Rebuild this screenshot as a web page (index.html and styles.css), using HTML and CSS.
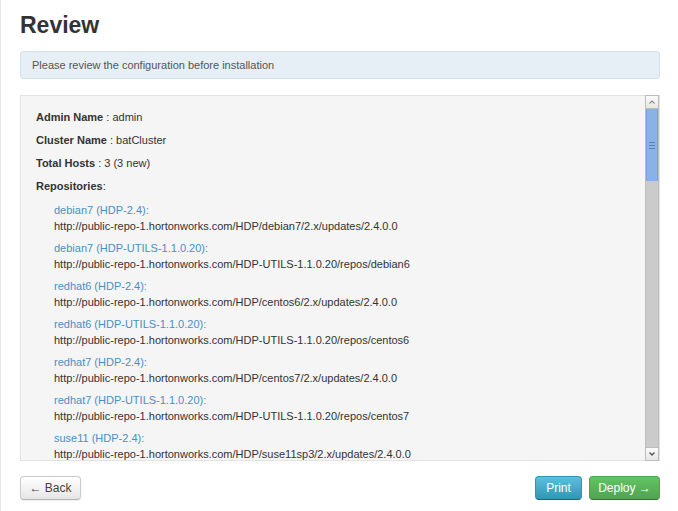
FILE: index.html
```html
<!DOCTYPE html>
<html>
<head>
<meta charset="utf-8">
<link rel="stylesheet" href="styles.css">
</head>
<body>
<div class="page">
  <h1 class="title">Review</h1>
  <div class="alert">Please review the configuration before installation</div>
  <div class="review-box">
    <div class="review-content">
      <p class="line"><b>Admin Name</b> : admin</p>
      <p class="line"><b>Cluster Name</b> : batCluster</p>
      <p class="line"><b>Total Hosts</b> : 3 (3 new)</p>
      <p class="line"><b>Repositories</b>:</p>
      <div class="repos">
        <div class="repo"><a class="repo-name">debian7 (HDP-2.4):</a><div class="repo-url">http://public-repo-1.hortonworks.com/HDP/debian7/2.x/updates/2.4.0.0</div></div>
        <div class="repo"><a class="repo-name">debian7 (HDP-UTILS-1.1.0.20):</a><div class="repo-url">http://public-repo-1.hortonworks.com/HDP-UTILS-1.1.0.20/repos/debian6</div></div>
        <div class="repo"><a class="repo-name">redhat6 (HDP-2.4):</a><div class="repo-url">http://public-repo-1.hortonworks.com/HDP/centos6/2.x/updates/2.4.0.0</div></div>
        <div class="repo"><a class="repo-name">redhat6 (HDP-UTILS-1.1.0.20):</a><div class="repo-url">http://public-repo-1.hortonworks.com/HDP-UTILS-1.1.0.20/repos/centos6</div></div>
        <div class="repo"><a class="repo-name">redhat7 (HDP-2.4):</a><div class="repo-url">http://public-repo-1.hortonworks.com/HDP/centos7/2.x/updates/2.4.0.0</div></div>
        <div class="repo"><a class="repo-name">redhat7 (HDP-UTILS-1.1.0.20):</a><div class="repo-url">http://public-repo-1.hortonworks.com/HDP-UTILS-1.1.0.20/repos/centos7</div></div>
        <div class="repo"><a class="repo-name">suse11 (HDP-2.4):</a><div class="repo-url">http://public-repo-1.hortonworks.com/HDP/suse11sp3/2.x/updates/2.4.0.0</div></div>
        <div class="repo"><a class="repo-name">suse11 (HDP-UTILS-1.1.0.20):</a><div class="repo-url">http://public-repo-1.hortonworks.com/HDP-UTILS-1.1.0.20/repos/suse11sp3</div></div>
      </div>
    </div>
    <div class="scrollbar">
      <div class="sb-btn"><svg width="8" height="6" viewBox="0 0 8 6"><path d="M1.5 4.5 L4 2 L6.5 4.5" fill="none" stroke="#888" stroke-width="1.1"/></svg></div>
      <div class="sb-thumb"><span class="grip"></span><span class="grip"></span><span class="grip"></span></div>
      <div class="sb-track"></div>
      <div class="sb-btn"><svg width="8" height="6" viewBox="0 0 8 6"><path d="M1.5 1.5 L4 4 L6.5 1.5" fill="none" stroke="#555" stroke-width="1.4"/></svg></div>
    </div>
  </div>
  <div class="actions">
    <button class="btn btn-default">&larr; Back</button>
    <div class="right-btns">
      <button class="btn btn-info">Print</button>
      <button class="btn btn-success">Deploy &rarr;</button>
    </div>
  </div>
</div>
</body>
</html>
```
FILE: styles.css
```css
html, body {
  margin: 0;
  padding: 0;
  background: #fff;
}
body {
  font-family: "Liberation Sans", Arial, sans-serif;
  font-size: 11px;
  color: #333;
}
.page {
  border-left: 1px solid #e6e6e6;
  min-height: 511px;
  box-sizing: border-box;
  padding: 10px 18px 0 19px;
}
.title {
  margin: 0;
  font-size: 23px;
  line-height: 30px;
  font-weight: bold;
  color: #333;
}
.alert {
  margin-top: 11px;
  background: #e5eff5;
  border: 1px solid #d3e3ea;
  border-radius: 3px;
  padding: 5px 11px;
  line-height: 16px;
  color: #555;
}
.review-box {
  margin-top: 16px;
  height: 366px;
  box-sizing: border-box;
  border: 1px solid #e3e3e3;
  background: #f5f5f5;
  display: flex;
}
.review-content {
  flex: 1;
  overflow: hidden;
  padding: 13px 15px;
}
.line {
  margin: 0 0 7px;
  line-height: 16px;
}
.line b {
  color: #333;
}
.repos {
  padding-left: 18px;
  margin-top: 8px;
}
.repo {
  margin-bottom: 6px;
  line-height: 16px;
}
.repo-name {
  color: #4a8fc3;
  text-decoration: none;
}
.repo-url {
  color: #333;
}
.scrollbar {
  width: 12px;
  margin-top: -1px;
  margin-bottom: -1px;
  display: flex;
  flex-direction: column;
  border-left: 1px solid #bdbdbd;
  border-right: 1px solid #bdbdbd;
  background: #c9c9c9;
}
.sb-btn {
  height: 12px;
  background: linear-gradient(#fafafa, #e6e6e6);
  border-top: 1px solid #bdbdbd;
  border-bottom: 1px solid #bdbdbd;
  display: flex;
  align-items: center;
  justify-content: center;
}
.sb-thumb {
  height: 72px;
  background: #8bb2e6;
  border-left: 1px solid #7aa2dc;
  border-right: 1px solid #7aa2dc;
  display: flex;
  flex-direction: column;
  align-items: center;
  justify-content: center;
  gap: 2px;
}
.grip {
  width: 6px;
  height: 1px;
  background: #5a7fb5;
}
.sb-track {
  flex: 1;
  background: #cbcbcb;
}
.actions {
  margin-top: 15px;
  display: flex;
  justify-content: space-between;
}
.right-btns {
  display: flex;
  gap: 7px;
}
.btn {
  font-family: "Liberation Sans", Arial, sans-serif;
  font-size: 12px;
  height: 24px;
  padding: 0 11px;
  border-radius: 4px;
  border: 1px solid #c5c5c5;
  cursor: pointer;
}
.btn-default {
  color: #444;
  width: 61px;
  padding: 0;
  background: linear-gradient(#ffffff, #e6e6e6);
  border-color: #cccccc #cccccc #b3b3b3;
  box-shadow: inset 0 1px 0 rgba(255,255,255,.2), 0 1px 2px rgba(0,0,0,.08);
}
.btn-info {
  color: #fff;
  width: 47px;
  padding: 0;
  background: linear-gradient(#5bc0de, #2f96b4);
  border-color: #2f96b4 #2f96b4 #1f6377;
}
.btn-success {
  color: #fff;
  width: 71px;
  padding: 0;
  background: linear-gradient(#62c462, #51a351);
  border-color: #51a351 #51a351 #387038;
}
```
